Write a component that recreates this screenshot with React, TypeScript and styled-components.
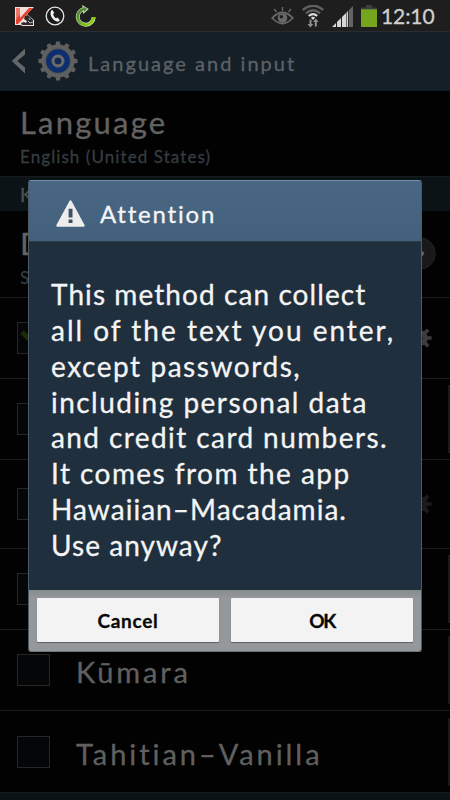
import React from 'react';
import styled, { createGlobalStyle } from 'styled-components';

const GlobalStyle = createGlobalStyle`
  * { box-sizing: border-box; }
  body { margin: 0; background: #000; font-family: Lato, "Noto Sans", sans-serif; font-variant-ligatures: none; -webkit-text-stroke: 0.3px currentColor; }
  svg { display: block; flex: none; }
`;

const Screen = styled.main`
  position: relative;
  width: 450px;
  height: 800px;
  overflow: hidden;
  background: #020202;
  display: flex;
  flex-direction: column;
`;

const StatusBar = styled.header`
  height: 31px;
  flex: none;
  background: #1e1e1e;
  display: flex;
  align-items: center;
  justify-content: space-between;
  padding: 1px 14px 0 14px;
`;

const StatusGroup = styled.div<{ $gap: number }>`
  display: flex;
  align-items: center;
  gap: ${(p) => p.$gap}px;
`;

const Clock = styled.time`
  width: 55px;
  margin-left: -4px;
  font-size: 21px;
  line-height: 28px;
  letter-spacing: -0.1px;
  color: #d0d0d0;
`;

const ActionBar = styled.nav`
  height: 60px;
  flex: none;
  display: flex;
  align-items: center;
  gap: 12px;
  padding-left: 11px;
  background: #141f28;
  border-top: 1px solid #262d33;
  border-bottom: 1px solid #0d1b22;
`;

const ActionTitle = styled.h1`
  margin: 0 0 0 -2px;
  padding-top: 3px;
  font-size: 20px;
  font-weight: 400;
  letter-spacing: 2.03px;
  color: #5d6266;
`;

const Preference = styled.section<{ $height: number; $top: number }>`
  position: relative;
  height: ${(p) => p.$height}px;
  flex: none;
  padding: ${(p) => p.$top}px 0 0 20px;
`;

const PreferenceTitle = styled.div`
  font-size: 31px;
  line-height: 38px;
  letter-spacing: 2.2px;
  color: #636363;
`;

const PreferenceSummary = styled.div`
  margin-top: 4px;
  font-size: 17px;
  line-height: 23px;
  letter-spacing: 1.08px;
  color: #343d41;
`;

const DisclosureBadge = styled.div`
  position: absolute;
  top: 26px;
  right: 14px;
`;

const CategoryHeader = styled.div<{ $height: number }>`
  height: ${(p) => p.$height}px;
  flex: none;
  display: flex;
  align-items: center;
  padding-left: 20px;
  background: #0b1317;
  border-top: 1px solid #151d21;
  font-size: 19px;
  letter-spacing: 1px;
  color: #4b5052;
`;

const MethodRow = styled.div<{ $height: number }>`
  height: ${(p) => p.$height}px;
  flex: none;
  display: flex;
  align-items: center;
  padding-left: 17px;
  border-top: 1px solid #1c1c1c;
`;

const CheckBox = styled.span`
  width: 33px;
  height: 32px;
  flex: none;
  border: 1.5px solid #262626;
  background: #050608;
`;

const MethodName = styled.span<{ $spacing: number }>`
  margin-left: 26px;
  padding-top: 3px;
  font-size: 29px;
  letter-spacing: ${(p) => p.$spacing}px;
  color: #606060;
  white-space: nowrap;
`;

const RowDivider = styled.span`
  width: 2px;
  height: 68px;
  margin-left: auto;
  background: #1a1a1a;
`;

const SettingsSlot = styled.span`
  margin-left: auto;
  padding-right: 18px;
`;

const Dialog = styled.div`
  position: absolute;
  left: 28px;
  top: 180px;
  width: 394px;
  height: 472px;
  display: flex;
  flex-direction: column;
  border: 1px solid #4c5a66;
  border-top-color: #7890a4;
  border-bottom-color: #6f7578;
  border-radius: 3px;
  overflow: hidden;
  background: #1f2f3d;
`;

const DialogHeader = styled.div`
  height: 61px;
  flex: none;
  display: flex;
  align-items: center;
  gap: 15px;
  padding: 4px 0 0 27px;
  background: linear-gradient(#496784, #43617c);
  border-bottom: 1px solid #2a3c4a;
`;

const DialogTitle = styled.h2`
  margin: 0;
  padding-top: 1px;
  font-size: 24px;
  line-height: 30px;
  font-weight: 400;
  letter-spacing: 1.8px;
  color: #f5f5f5;
`;

const DialogBody = styled.div`
  flex: 1;
  padding: 35px 0 0 22px;
  color: #f4f4f4;
`;

const MessageLine = styled.div<{ $spacing: number }>`
  font-size: 28px;
  line-height: 35.86px;
  letter-spacing: ${(p) => p.$spacing}px;
  white-space: nowrap;
`;

const DialogFooter = styled.div`
  height: 61px;
  flex: none;
  display: grid;
  grid-template-columns: 182px 182px;
  column-gap: 12px;
  padding: 8px 8px 9px;
  background: linear-gradient(#868b8f, #94989b 8px);
`;

const DialogButton = styled.button<{ $spacing: number }>`
  height: 44px;
  padding: 0;
  border: 0;
  border-radius: 1px;
  background: #f3f3f3;
  box-shadow: 0 1px 1px #5e6265;
  font: 700 19px Lato, sans-serif;
  letter-spacing: ${(p) => p.$spacing}px;
  color: #080808;
`;

const MESSAGE: [string, number][] = [
  ['This method can collect', 1.08],
  ['all of the text you enter,', 2.0],
  ['except passwords,', 1.55],
  ['including personal data', 1.47],
  ['and credit card numbers.', 1.41],
  ['It comes from the app', 1.45],
  ['Hawaiian–Macadamia.', 1.03],
  ['Use anyway?', 1.05],
];

const gearPath = (teeth: number, outer: number, inner: number) => {
  const step = (Math.PI * 2) / teeth;
  const points: string[] = [];
  for (let i = 0; i < teeth; i++) {
    const a = i * step - Math.PI / 2;
    [
      [-0.3, inner],
      [-0.19, outer],
      [0.19, outer],
      [0.3, inner],
    ].forEach(([k, r]) => {
      points.push(`${(r * Math.cos(a + k * step)).toFixed(2)} ${(r * Math.sin(a + k * step)).toFixed(2)}`);
    });
  }
  return `M${points.join('L')}Z`;
};

const AntivirusIcon = () => (
  <svg width="21" height="21" viewBox="0 0 21 21">
    <path d="M1 1h19l-7 7 7 6v6H8l-1-1H1z" fill="#f2dedb" />
    <path d="M2 2h4v10L15 2h4L4 18H2z" fill="#e8402f" />
    <path d="M2 2h4v6L2 14z" fill="#ef7567" />
    <path d="M11 10l3-1 5 5v5H8l-1-2 3-1 2 1 1-2-3-2z" fill="#292929" />
    <path d="M14 15l2 2 3-1M15 12l1 2" stroke="#b9b9b9" fill="none" />
  </svg>
);

const PhoneIcon = () => (
  <svg width="20" height="20" viewBox="0 0 20 20">
    <circle cx="10" cy="10" r="8.8" fill="#1b1b1b" stroke="#e8e8e8" strokeWidth="1.3" />
    <path d="M6.2 4.6l1.3-.7 1.8 3-1.2 1c.3 1.8 1.5 3.6 3 4.4l1.5-.8 2.2 2.7-1.2 1.4c-4.7.5-10-6-7.4-11z" fill="#f2f2f2" />
  </svg>
);

const RefreshIcon = () => (
  <svg width="21" height="22" viewBox="0 0 21 22">
    <defs>
      <linearGradient id="refresh" x1="0" y1="0" x2="1" y2="1">
        <stop offset="0" stopColor="#47793a" />
        <stop offset="1" stopColor="#98dc08" />
      </linearGradient>
    </defs>
    <path d="M9.5 3.9a8 8 0 1 0 9.2 8" fill="none" stroke="#cfe0c6" strokeWidth="4" />
    <path d="M7.2 0l6.6 4-5.6 5z" fill="#cfe0c6" />
    <path d="M9.5 3.9a8 8 0 1 0 9.2 8" fill="none" stroke="url(#refresh)" strokeWidth="2.8" />
    <path d="M8.4 1.6l4 2.5-3.4 3z" fill="#568d3e" />
  </svg>
);

const EyeIcon = () => (
  <svg width="23" height="19" viewBox="0 0 23 19">
    <path d="M1.2 11Q11.5 0 21.8 11Q11.5 22 1.2 11z" fill="none" stroke="#686868" strokeWidth="1.8" />
    <circle cx="11.5" cy="11" r="4.8" fill="#686868" />
    <circle cx="10.4" cy="9.8" r="1.7" fill="#1e1e1e" />
    <path d="M11.5 0v3.8M3.2 2l2.2 3M19.8 2l-2.2 3" stroke="#686868" strokeWidth="1.4" />
  </svg>
);

const WifiIcon = () => (
  <svg width="22" height="23" viewBox="0 0 22 23">
    <path d="M.8 5Q11-3.5 21.2 5M4 8.3Q11 2.3 18 8.3" fill="none" stroke="#606060" strokeWidth="2.4" />
    <path d="M6.8 11Q11 7.2 15.2 11" fill="none" stroke="#dadada" strokeWidth="2.3" />
    <path d="M8.8 12.6Q11 11 13.2 12.6L11 15z" fill="#dadada" />
    <path d="M7.5 14.5h2V19h1.8l-2.8 3.5L5.5 19h2zM12.8 21.5h2V17h1.8l-2.8-3.5-2.8 3.5h1.8z" fill="#909090" />
  </svg>
);

const SignalIcon = () => (
  <svg width="21" height="21" viewBox="0 0 21 21">
    <path d="M0 21l4-4v4zM5 16l4-4v9H5zM10 11l4-4v14h-4zM14.6 6.4V21h1.4V5z" fill="#d6d6d6" />
    <path d="M16.8 4.2L21 0v21h-4.2z" fill="#646464" />
  </svg>
);

const BatteryIcon = () => (
  <svg width="16" height="22" viewBox="0 0 16 22">
    <path d="M5 0h6v2.5h5V5H0V2.5h5z" fill="#3a3f42" />
    <path d="M0 4.3h16V22H0z" fill="#74a51c" />
  </svg>
);

const BackIcon = () => (
  <svg width="15" height="26" viewBox="0 0 15 26">
    <path d="M14 .5v6L6.3 13l7.7 6.5v6L.8 13z" fill="#646769" />
  </svg>
);

const SettingsIcon = () => (
  <svg width="40" height="40" viewBox="-20 -20 40 40">
    <path d={gearPath(12, 19.6, 16)} fill="#606060" />
    <circle r="16.6" fill="#606060" />
    <circle r="12.6" fill="#4a4e54" />
    <circle r="11.8" fill="#0d2f70" />
    <circle r="4.9" fill="none" stroke="#6a6a6a" strokeWidth="3.2" />
    <circle r="3.3" fill="#142c55" />
  </svg>
);

const SmallGear = ({ color }: { color: string }) => (
  <svg width="24" height="24" viewBox="-12 -12 24 24">
    <path d={gearPath(8, 11.8, 7.8)} fill={color} />
    <circle r="2.5" fill="#020202" />
  </svg>
);

const WarningIcon = () => (
  <svg width="29" height="27" viewBox="0 0 29 27">
    <path d="M14.5 1.5L27.5 25.5H1.5z" fill="#ededed" stroke="#ededed" strokeWidth="2.4" strokeLinejoin="round" />
    <path d="M12.6 8.8h3.9v8.8h-3.9zM12.6 19.4h3.9V23h-3.9z" fill="#3d5064" />
  </svg>
);

const DisclosureIcon = () => (
  <svg width="33" height="33" viewBox="0 0 33 33">
    <circle cx="16.5" cy="16.5" r="15.8" fill="#191919" stroke="#232323" />
    <path d="M17 11l4.5 5.5L17 22z" fill="#666" />
  </svg>
);

const CheckMark = () => (
  <svg width="30" height="29" viewBox="0 0 30 29">
    <path d="M4 9l9 9L28 2" fill="none" stroke="#1a2c06" strokeWidth="5" />
  </svg>
);

export default function App() {
  return (
    <>
      <GlobalStyle />
      <Screen>
        <StatusBar>
          <StatusGroup $gap={10}>
            <AntivirusIcon />
            <PhoneIcon />
            <RefreshIcon />
          </StatusGroup>
          <StatusGroup $gap={8}>
            <EyeIcon />
            <WifiIcon />
            <SignalIcon />
            <BatteryIcon />
            <Clock>12:10</Clock>
          </StatusGroup>
        </StatusBar>

        <ActionBar>
          <BackIcon />
          <SettingsIcon />
          <ActionTitle>Language and input</ActionTitle>
        </ActionBar>

        <Preference $height={85} $top={12}>
          <PreferenceTitle>Language</PreferenceTitle>
          <PreferenceSummary>English (United States)</PreferenceSummary>
        </Preference>

        <CategoryHeader $height={35}>K</CategoryHeader>

        <Preference $height={86} $top={13}>
          <PreferenceTitle>D</PreferenceTitle>
          <PreferenceSummary>S</PreferenceSummary>
          <DisclosureBadge>
            <DisclosureIcon />
          </DisclosureBadge>
        </Preference>

        <MethodRow $height={81}>
          <CheckBox>
            <CheckMark />
          </CheckBox>
          <SettingsSlot>
            <SmallGear color="#3c3c3c" />
          </SettingsSlot>
        </MethodRow>
        <MethodRow $height={81}>
          <CheckBox />
          <RowDivider />
        </MethodRow>
        <MethodRow $height={89}>
          <CheckBox />
          <SettingsSlot>
            <SmallGear color="#1b1b1b" />
          </SettingsSlot>
        </MethodRow>
        <MethodRow $height={81}>
          <CheckBox />
          <RowDivider />
        </MethodRow>
        <MethodRow $height={81}>
          <CheckBox />
          <MethodName $spacing={2.85}>Kūmara</MethodName>
          <RowDivider />
        </MethodRow>
        <MethodRow $height={82}>
          <CheckBox />
          <MethodName $spacing={2.95}>Tahitian–Vanilla</MethodName>
          <RowDivider />
        </MethodRow>
        <CategoryHeader $height={35} />

        <Dialog role="dialog">
          <DialogHeader>
            <WarningIcon />
            <DialogTitle>Attention</DialogTitle>
          </DialogHeader>
          <DialogBody>
            {MESSAGE.map(([line, spacing]) => (
              <MessageLine key={line} $spacing={spacing}>
                {line}
              </MessageLine>
            ))}
          </DialogBody>
          <DialogFooter>
            <DialogButton $spacing={0.7}>Cancel</DialogButton>
            <DialogButton $spacing={-1.5}>OK</DialogButton>
          </DialogFooter>
        </Dialog>
      </Screen>
    </>
  );
}
